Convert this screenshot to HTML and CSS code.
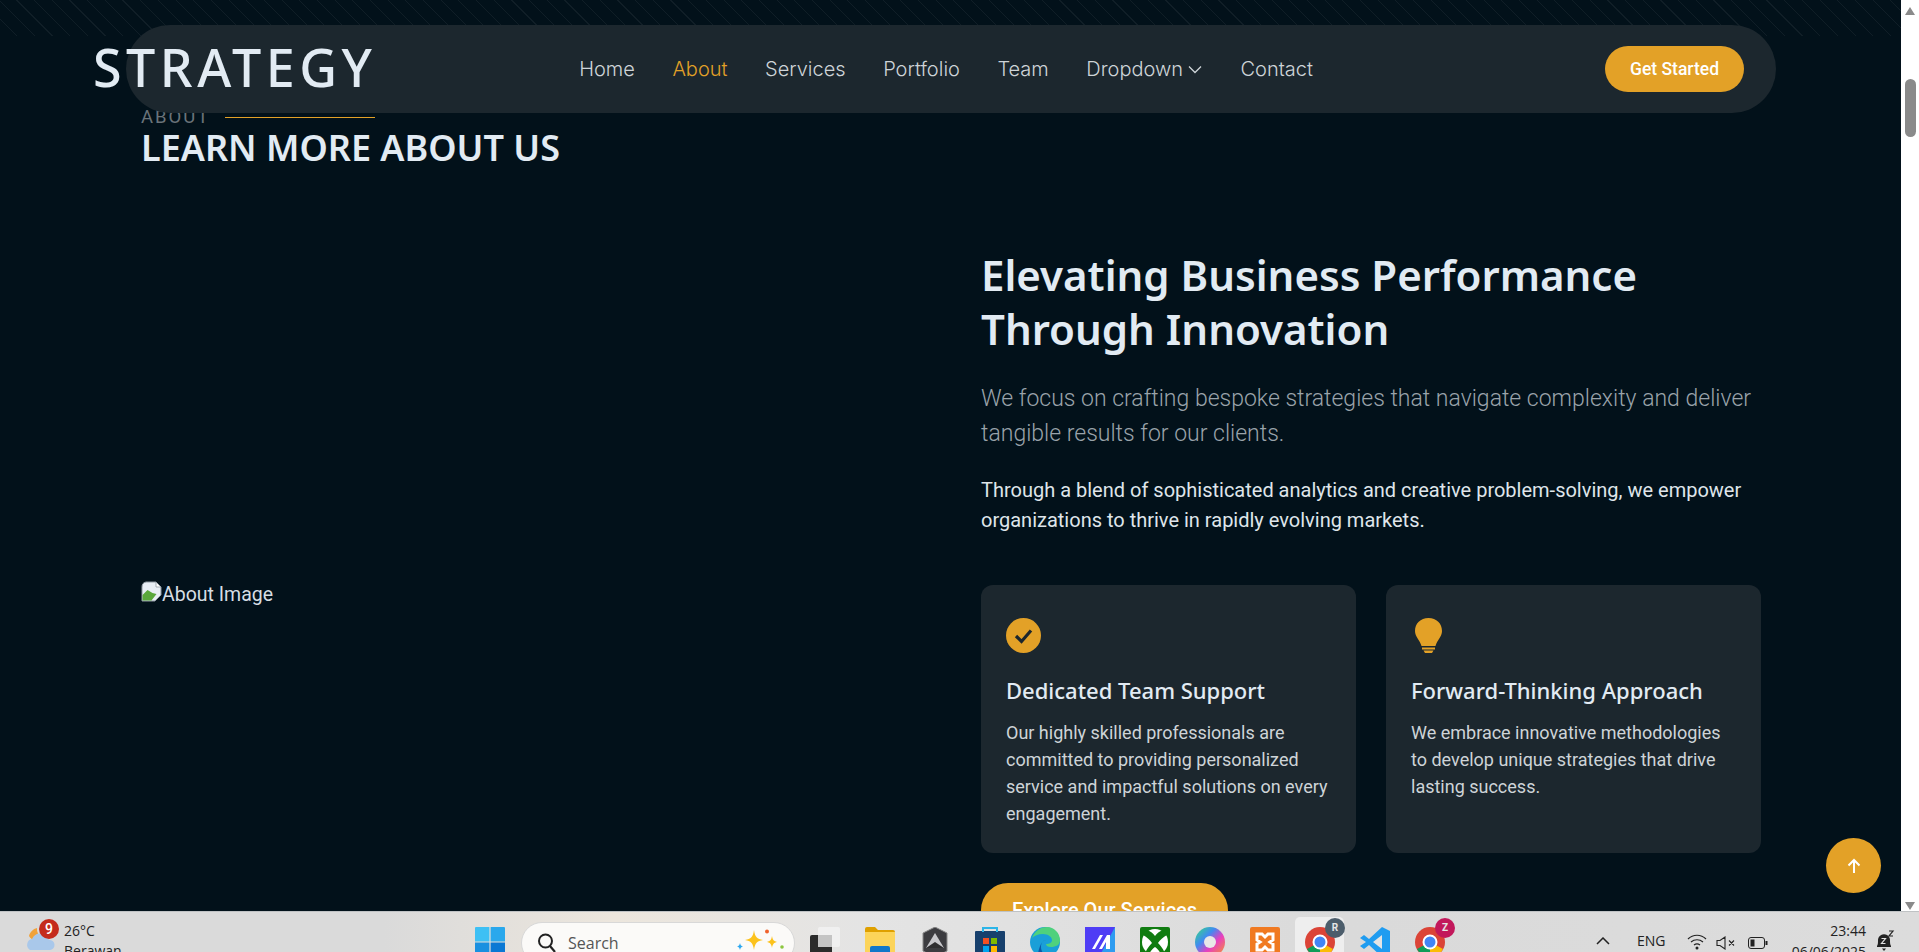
FILE: index.html
```html
<!DOCTYPE html>
<html lang="en">
<head>
    <meta charset="UTF-8">
    <meta name="viewport" content="width=device-width, initial-scale=1.0">
    <title>Strategy - About</title>
    <link rel="stylesheet" href="styles.css">
</head>
<body>
    <div class="window">
        <div class="page">
            <div class="pattern"></div>

            <header class="header">
                <a href="#" class="logo">STRATEGY</a>
                <nav class="nav">
                    <a href="#">Home</a>
                    <a href="#" class="active">About</a>
                    <a href="#">Services</a>
                    <a href="#">Portfolio</a>
                    <a href="#">Team</a>
                    <a href="#" class="dropdown">Dropdown
                        <svg width="16" height="16" viewBox="0 0 16 16"><path d="M2 5.500l6 6 6-6" fill="none" stroke="currentColor" stroke-width="1.300"/></svg>
                    </a>
                    <a href="#">Contact</a>
                </nav>
                <a href="#" class="btn-started">Get Started</a>
            </header>

            <section class="about">
                <div class="section-title">
                    <div class="eyebrow"><span>ABOUT</span><i class="eyebrow-line"></i></div>
                    <h2>LEARN MORE ABOUT US</h2>
                </div>

                <div class="about-grid">
                    <div class="about-image">
                        <svg class="broken" width="21" height="21" viewBox="0 0 21 21">
                            <path d="M5 1h10l5 5v8l-6 6H1V6a5 5 0 0 1 4-5z" fill="#e8eef5" stroke="#8f99a2"/>
                            <path d="M1.500 14l5-5 5 3 4 1-5 6.500H1.500z" fill="#5aa83c"/>
                            <path d="M15 1v5h5z" fill="#fff" stroke="#8f99a2" stroke-width=".8"/>
                        </svg><span>About Image</span>
                    </div>

                    <div class="about-content">
                        <h3>Elevating Business Performance Through Innovation</h3>
                        <p class="lead">We focus on crafting bespoke strategies that navigate complexity and deliver tangible results for our clients.</p>
                        <p class="text">Through a blend of sophisticated analytics and creative problem-solving, we empower organizations to thrive in rapidly evolving markets.</p>

                        <div class="cards">
                            <div class="card">
                                <svg class="card-icon" width="35" height="35" viewBox="0 0 35 35">
                                    <circle cx="17.500" cy="17.500" r="17.500" fill="#e3a127"/>
                                    <path d="M10 18l5.500 5.500 9.500-11" fill="none" stroke="#1c262d" stroke-width="3.200"/>
                                </svg>
                                <h4>Dedicated Team Support</h4>
                                <p>Our highly skilled professionals are committed to providing personalized service and impactful solutions on every engagement.</p>
                            </div>
                            <div class="card">
                                <svg class="card-icon" width="35" height="35" viewBox="0 0 35 35">
                                    <path d="M17.500 0C9.500 0 4 5.500 4 13c0 6 5 9 6.500 15h14c1.500-6 6.500-9 6.500-15C31 5.500 25.500 0 17.500 0z" fill="#e3a127"/>
                                    <path d="M11 29.500h13v2H11zM12.500 32.500h10l-1.500 2.500h-7z" fill="#e3a127"/>
                                </svg>
                                <h4>Forward-Thinking Approach</h4>
                                <p>We embrace innovative methodologies to develop unique strategies that drive lasting success.</p>
                            </div>
                        </div>

                        <a href="#" class="btn-explore">Explore Our Services</a>
                    </div>
                </div>
            </section>

            <a href="#" class="scroll-top">
                <svg width="18" height="18" viewBox="0 0 18 18"><path d="M9 16V3M3.500 8.500L9 3l5.500 5.500" fill="none" stroke="#fff" stroke-width="2"/></svg>
            </a>
        </div>

        <div class="scrollbar">
            <svg width="12" height="10" viewBox="0 0 12 10"><path d="M6 1l5 8H1z" fill="#8a8a8a"/></svg>
            <div class="scrollbar-track"><div class="scrollbar-thumb"></div></div>
            <svg width="12" height="10" viewBox="0 0 12 10"><path d="M1 1h10L6 9z" fill="#8a8a8a"/></svg>
        </div>
    </div>

    <footer class="taskbar">
        <div class="weather">
            <svg class="weather-icon" width="32" height="32" viewBox="0 0 32 32">
                <path d="M4 12a9 9 0 0 0 14 2 10 10 0 0 1-6-10C8 5 5 8 4 12z" fill="#f0a23a"/>
                <path d="M5 26a6 6 0 0 1 2-11 9 9 0 0 1 17 1 5 5 0 0 1 1 10z" fill="#a9c8ea"/>
            </svg>
            <span class="weather-badge">9</span>
            <div class="weather-text"><span>26°C</span><span>Berawan</span></div>
        </div>

        <div class="task-icons">
            <svg class="win-logo" width="30" height="30" viewBox="0 0 30 30">
                <path d="M0 1a1 1 0 0 1 1-1h13.400v14.400H0z" fill="#3ec0f4"/>
                <path d="M15.600 0H29a1 1 0 0 1 1 1v13.400H15.600z" fill="#2aa8ec"/>
                <path d="M0 15.600h14.400V30H1a1 1 0 0 1-1-1z" fill="#1a90e0"/>
                <path d="M15.600 15.600H30V29a1 1 0 0 1-1 1H15.600z" fill="#0a78d4"/>
            </svg>

            <div class="search">
                <svg width="20" height="22" viewBox="0 0 20 22"><circle cx="8.500" cy="9" r="6.500" fill="none" stroke="#222" stroke-width="2"/><path d="M13 14l5 6" stroke="#222" stroke-width="2.200"/></svg>
                <span>Search</span>
                <svg class="sparkle" width="50" height="30" viewBox="0 0 50 30">
                    <path d="M18 2c1 7 3 9 9 10-6 1-8 3-9 10-1-7-3-9-9-10 6-1 8-3 9-10z" fill="#fcc21b"/>
                    <path d="M36 8c.6 4 2 5 5 6-3 .6-4.400 2-5 6-.6-4-2-5.400-5-6 3-1 4.400-2 5-6z" fill="#fcc21b"/>
                    <path d="M4 15c.4 2 1 3 3 3.500-2 .5-2.600 1.500-3 3.500-.4-2-1-3-3-3.500 2-.5 2.600-1.500 3-3.500z" fill="#2ea8f0"/>
                    <circle cx="31" cy="3.500" r="2" fill="#f0622c"/><circle cx="46" cy="19" r="1.800" fill="#8cc63f"/>
                </svg>
            </div>

            <div class="slot">
                <svg width="30" height="30" viewBox="0 0 30 30">
                    <rect x="0" y="8" width="22" height="22" rx="2" fill="#2b2b2b"/>
                    <rect x="8" y="0" width="22" height="20" rx="2" fill="#f2f2f2" opacity=".85"/>
                    <rect x="8" y="8" width="14" height="12" fill="#c4c4c4"/>
                </svg>
            </div>
            <div class="slot">
                <svg width="30" height="30" viewBox="0 0 30 30">
                    <path d="M0 2a2 2 0 0 1 2-2h8l3 3h15a2 2 0 0 1 2 2v3H0z" fill="#dfa000"/>
                    <path d="M0 5h30v25H0z" fill="#fcd45a"/>
                    <rect x="5" y="19" width="20" height="11" rx="2" fill="#1277c9"/>
                </svg>
            </div>
            <div class="slot">
                <svg width="30" height="30" viewBox="0 0 30 30">
                    <path d="M15 0l12 6v18l-12 6-12-6V6z" fill="#3c3c40" stroke="#8a8a8a"/>
                    <path d="M15 6l9 15H6z" fill="#c8c8cc"/><path d="M15 15l9 6H6z" fill="#2e2e30"/>
                </svg>
            </div>
            <div class="slot">
                <svg width="30" height="30" viewBox="0 0 30 30">
                    <rect y="4" width="30" height="26" rx="1" fill="#17406d"/>
                    <path d="M8 5V1h14v4" fill="none" stroke="#2cb5e8" stroke-width="2"/>
                    <rect x="8" y="11" width="6" height="6" fill="#f25022"/><rect x="16" y="11" width="6" height="6" fill="#7fba00"/>
                    <rect x="8" y="19" width="6" height="6" fill="#00a4ef"/><rect x="16" y="19" width="6" height="6" fill="#ffb900"/>
                </svg>
            </div>
            <div class="slot">
                <svg width="30" height="30" viewBox="0 0 30 30">
                    <circle cx="15" cy="15" r="15" fill="#1a9fd8"/>
                    <path d="M2 11C5 3 12 0 17 0c7 0 13 6 13 13 0 5-4 7-9 7-3 0-5-1-5-3 3 0 6-1 6-4 0-3-4-6-9-6-5 0-9 2-11 4z" fill="#4fd17d"/>
                    <path d="M16 13c-3 0-5 3-5 7 0 5 4 10 10 10-4 1-9 0-13-3 0 0 2-14 8-14z" fill="#0c5aa8"/>
                </svg>
            </div>
            <div class="slot">
                <svg width="30" height="30" viewBox="0 0 30 30">
                    <rect width="30" height="30" fill="#4f3df5"/><path d="M30 0v30H14z" fill="#2e9cf0"/>
                    <path d="M7 22L15 8h3L10 22zM14 22L22 8h3v14h-4v-7l-4 7z" fill="#fff"/>
                </svg>
            </div>
            <div class="slot">
                <svg width="30" height="30" viewBox="0 0 30 30">
                    <rect width="30" height="30" rx="2" fill="#107c10"/>
                    <circle cx="15" cy="15" r="13" fill="#fff"/>
                    <path d="M7 3c3 1 6 3 8 6 2-3 5-5 8-6l4 5c-4 2-7 5-9 8 3 3 6 7 7 11l-3 2c-2-4-4-7-7-9-3 2-5 5-7 9l-3-2c1-4 4-8 7-11-2-3-5-6-9-8z" fill="#107c10"/>
                </svg>
            </div>
            <div class="slot">
                <svg width="30" height="30" viewBox="0 0 30 30">
                    <defs><linearGradient id="wheel" x1="0" y1="0" x2="1" y2="1"><stop offset="0" stop-color="#35e07a"/><stop offset=".35" stop-color="#3f8cf0"/><stop offset=".6" stop-color="#e83fc0"/><stop offset="1" stop-color="#f6a020"/></linearGradient></defs>
                    <circle cx="15" cy="15" r="15" fill="url(#wheel)"/>
                    <circle cx="15" cy="15" r="6" fill="#e8e8e8"/>
                </svg>
            </div>
            <div class="slot">
                <svg width="30" height="30" viewBox="0 0 30 30">
                    <rect width="30" height="30" rx="2" fill="#f07a22"/>
                    <path d="M7 7h5l3 3 3-3h5v6l-3 2 3 2v6h-5l-3-3-3 3H7v-6l3-2-3-2z" fill="none" stroke="#fff" stroke-width="3"/>
                </svg>
            </div>
            <div class="slot slot-active">
                <svg width="30" height="30" viewBox="0 0 30 30">
                    <circle cx="15" cy="15" r="15" fill="#db4437"/>
                    <path d="M15 15L2 22a15 15 0 0 0 13 8z" fill="#0f9d58"/>
                    <path d="M15 15l13 7a15 15 0 0 1-13 8z" fill="#fbbc05"/>
                    <circle cx="15" cy="15" r="7.500" fill="#fff"/><circle cx="15" cy="15" r="5.500" fill="#4285f4"/>
                </svg>
                <span class="profile-badge profile-grey">R</span>
            </div>
            <div class="slot">
                <svg width="30" height="30" viewBox="0 0 30 30">
                    <path d="M22 0l8 4v22l-8 4-13-12-5 4-4-3 6-4-6-4 4-3 5 4z" fill="#1f9cf0"/>
                    <path d="M22 8v14l-9-7z" fill="#e4e4e4"/>
                </svg>
            </div>
            <div class="slot">
                <svg width="30" height="30" viewBox="0 0 30 30">
                    <circle cx="15" cy="15" r="15" fill="#db4437"/>
                    <path d="M15 15L2 22a15 15 0 0 0 13 8z" fill="#0f9d58"/>
                    <path d="M15 15l13 7a15 15 0 0 1-13 8z" fill="#fbbc05"/>
                    <circle cx="15" cy="15" r="7.500" fill="#fff"/><circle cx="15" cy="15" r="5.500" fill="#4285f4"/>
                </svg>
                <span class="profile-badge profile-pink">Z</span>
            </div>
        </div>

        <div class="tray">
            <svg class="chevron" width="14" height="8" viewBox="0 0 14 8"><path d="M1 7l6-6 6 6" fill="none" stroke="#222" stroke-width="1.500"/></svg>
            <span class="lang">ENG</span>
            <svg class="wifi" width="20" height="16" viewBox="0 0 20 16"><path d="M1 5c5-5 13-5 18 0M4 8c3.500-3 8.500-3 12 0M7 11c2-1.500 4-1.500 6 0" fill="none" stroke="#222" stroke-width="1.200"/><circle cx="10" cy="14" r="1.500" fill="#222"/></svg>
            <svg class="volume" width="20" height="14" viewBox="0 0 20 14"><path d="M1 4.500h3L9 1v12L4 9.500H1zM13 4.500l5 5M18 4.500l-5 5" fill="none" stroke="#222" stroke-width="1.100"/></svg>
            <svg class="battery" width="20" height="12" viewBox="0 0 20 12"><rect x=".5" y=".5" width="16" height="11" rx="2.500" fill="none" stroke="#222"/><rect x="2.500" y="2.500" width="4" height="7" fill="#222"/><rect x="17.500" y="4" width="2" height="4" fill="#222"/></svg>
            <div class="clock"><span>23:44</span><span>06/06/2025</span></div>
            <svg class="bell" width="20" height="22" viewBox="0 0 20 22"><path d="M2 16c1-2 1-3 1-6a6 6 0 0 1 9-5c2 1 3 3 3 5 0 3 0 4 1 6v1H2z" fill="#222"/><path d="M7 18.500h4l-2 2.500z" fill="#222"/><path d="M6.500 8.500h4l-4 5h4" fill="none" stroke="#e0e0e0" stroke-width="1.200"/><path d="M14 1h4l-4 5h4" fill="none" stroke="#222" stroke-width="1.200"/></svg>
        </div>
    </footer>
</body>
</html>
```

FILE: styles.css
```css
* {
    box-sizing: border-box;
}
html, body {
    margin: 0;
    height: 100%;
    overflow: hidden;
}
body {
    display: flex;
    flex-direction: column;
    height: 952px;
    font-family: Roboto, "Liberation Sans", sans-serif;
    background-color: #02111a;
}
a {
    text-decoration: none;
    color: inherit;
}
.window {
    display: flex;
    height: 911px;
    flex: none;
}
.page {
    position: relative;
    flex: 1;
    overflow: hidden;
    background-color: #02111a;
    color: #e2ebf3;
}
.pattern {
    position: absolute;
    top: 0;
    left: 0;
    right: 0;
    height: 36px;
    background-image: repeating-linear-gradient(45deg, transparent 0, transparent 11.7px, rgba(255, 255, 255, 0.055) 11.7px, rgba(255, 255, 255, 0.055) 12.5px);
}

/* header */
.header {
    position: absolute;
    top: 25px;
    left: 126px;
    width: 1650px;
    height: 88px;
    display: flex;
    align-items: center;
    padding-right: 32px;
    border-radius: 44px;
    background-color: #1c272e;
    z-index: 5;
}
.logo {
    margin-left: -33px;
    margin-top: -4px;
    font-family: "Noto Sans", sans-serif;
    font-size: 52px;
    font-weight: 500;
    letter-spacing: 4.500px;
    line-height: 1;
    color: #e2ebf3;
}
.nav {
    display: flex;
    align-items: center;
    gap: 37.500px;
    margin-left: auto;
    margin-right: 292px;
    font-family: Inter, sans-serif;
    font-size: 20px;
    font-weight: 300;
    color: #ced4d8;
}
.nav .active {
    color: #e3a127;
}
.dropdown {
    display: flex;
    align-items: center;
    gap: 4px;
}
.btn-started {
    display: flex;
    align-items: center;
    height: 46px;
    padding: 0 25px;
    border-radius: 23px;
    background-color: #e3a127;
    color: #fff;
    font-size: 17.500px;
    font-weight: 500;
}

/* about section */
.about {
    padding: 108px 140px 0 141px;
}
.eyebrow {
    display: flex;
    align-items: center;
    gap: 15px;
    height: 18px;
    font-size: 18.500px;
    line-height: 18px;
    letter-spacing: 2px;
    color: #6a7379;
}
.eyebrow-line {
    width: 150px;
    height: 1px;
    background-color: #e3a127;
}
.section-title h2 {
    margin: 2px 0 0 0;
    font-family: "Noto Sans", sans-serif;
    font-size: 36px;
    font-weight: 600;
    line-height: 40px;
    color: #e2ebf3;
}
.about-grid {
    display: grid;
    grid-template-columns: 780px 780px;
    gap: 60px;
    align-items: center;
    margin-top: 80px;
}
.about-image {
    display: flex;
    align-items: center;
    padding-top: 4px;
    font-size: 19.500px;
    color: #d6dee4;
}
.broken {
    margin-top: -7px;
    flex: none;
}
.about-content h3 {
    margin: 0 0 25px 0;
    font-family: "Noto Sans", sans-serif;
    font-size: 42px;
    font-weight: 600;
    line-height: 54px;
    color: #e2ebf3;
}
.lead {
    margin: 0 0 24px 0;
    font-size: 23px;
    font-weight: 300;
    line-height: 35px;
    color: #9aa3aa;
}
.text {
    margin: 0 0 50px 0;
    font-size: 20px;
    line-height: 30px;
    color: #dfe5ea;
}
.cards {
    display: grid;
    grid-template-columns: 375px 375px;
    gap: 30px;
    margin-bottom: 30px;
}
.card {
    height: 268px;
    padding: 33px 25px 0 25px;
    border-radius: 12px;
    background-color: #1c272e;
}
.card-icon {
    display: block;
    margin-bottom: 21px;
}
.card h4 {
    margin: 0 0 13px 0;
    font-family: "Noto Sans", sans-serif;
    font-size: 22px;
    font-weight: 500;
    line-height: 32px;
    color: #e2ebf3;
}
.card p {
    margin: 0;
    font-size: 18px;
    line-height: 27px;
    color: #ced4d8;
}
.btn-explore {
    display: inline-block;
    padding: 15px 31px;
    border-radius: 30px;
    background-color: #e3a127;
    color: #fff;
    font-size: 20px;
    font-weight: 500;
}
.scroll-top {
    position: absolute;
    right: 20px;
    top: 838px;
    display: flex;
    align-items: center;
    justify-content: center;
    width: 55px;
    height: 55px;
    border-radius: 50%;
    background-color: #e3a127;
}

/* browser scrollbar */
.scrollbar {
    width: 18px;
    flex: none;
    display: flex;
    flex-direction: column;
    align-items: center;
    padding-top: 6px;
    background-color: #fff;
}
.scrollbar-track {
    flex: 1;
    padding-top: 63px;
}
.scrollbar-thumb {
    width: 11px;
    height: 58px;
    border-radius: 6px;
    background-color: #8a8a8a;
}

/* windows taskbar */
.taskbar {
    position: relative;
    flex: none;
    height: 41px;
    overflow: hidden;
    display: flex;
    align-items: flex-start;
    border-top: 1px solid #bfc2c4;
    background: linear-gradient(90deg, #dadada 0%, #dadada 20%, #ece6dd 32%, #e4e4e4 45%, #dadada 70%, #dcdcdc 100%);
    color: #222;
    font-family: "Open Sans", sans-serif;
}
.weather {
    position: relative;
    flex: none;
    width: 475px;
    display: flex;
    padding: 0 0 0 25px;
}
.weather-icon {
    margin-top: 12px;
}
.weather-badge {
    position: absolute;
    left: 39px;
    top: 7px;
    width: 20px;
    height: 20px;
    border-radius: 50%;
    background-color: #c42b1c;
    color: #fff;
    font-family: Roboto, sans-serif;
    font-size: 14px;
    font-weight: 500;
    line-height: 20px;
    text-align: center;
}
.weather-text {
    display: flex;
    flex-direction: column;
    margin: 9px 0 0 7px;
    font-size: 14px;
    line-height: 20px;
}
.task-icons {
    flex: none;
    display: flex;
    align-items: flex-start;
    padding-top: 15px;
}
.win-logo {
    flex: none;
    margin-right: 16px;
}
.search {
    flex: none;
    width: 274px;
    height: 42px;
    margin-top: -5px;
    margin-right: 2px;
    display: flex;
    align-items: center;
    padding-left: 15px;
    gap: 11px;
    border: 1px solid #d8d8d8;
    border-radius: 21px;
    background-color: #fbfaf8;
    font-size: 16px;
    color: #555;
}
.sparkle {
    margin-left: auto;
    margin-right: 8px;
}
.slot {
    position: relative;
    flex: none;
    width: 55px;
    display: flex;
    justify-content: center;
}
.slot-active::before {
    content: "";
    position: absolute;
    left: 3px;
    right: 3px;
    top: -10px;
    height: 60px;
    border-radius: 5px;
    background-color: #eeeeee;
}
.slot svg {
    position: relative;
}
.profile-badge {
    position: absolute;
    left: 33px;
    top: -9px;
    width: 20px;
    height: 20px;
    border-radius: 50%;
    color: #e6e6e6;
    font-family: Roboto, sans-serif;
    font-size: 10px;
    font-weight: 700;
    line-height: 20px;
    text-align: center;
}
.profile-grey {
    background-color: #4c5d6b;
}
.profile-pink {
    background-color: #c2185b;
}
.tray {
    position: absolute;
    top: 0;
    right: 0;
    left: 1596px;
    height: 40px;
    display: flex;
    align-items: flex-start;
}
.tray svg {
    flex: none;
}
.chevron {
    margin-top: 25px;
}
.lang {
    margin: 19px 0 0 27px;
    width: 30px;
    font-size: 14px;
    line-height: 20px;
}
.wifi {
    margin: 22px 0 0 20px;
}
.volume {
    margin: 24px 0 0 9px;
}
.battery {
    margin: 25px 0 0 12px;
}
.clock {
    width: 98px;
    display: flex;
    flex-direction: column;
    align-items: flex-end;
    padding-top: 8px;
    font-size: 14px;
    line-height: 21px;
}
.bell {
    margin: 18px 0 0 9px;
}
```
